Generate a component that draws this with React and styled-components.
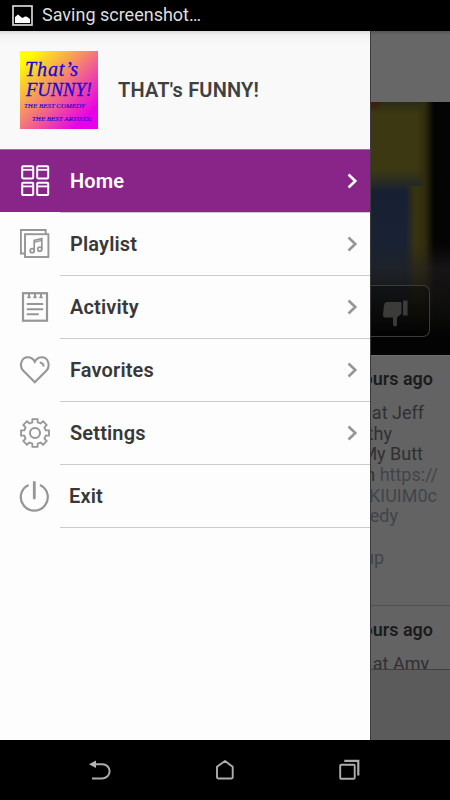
import styled, { createGlobalStyle } from "styled-components";

const GlobalStyle = createGlobalStyle`
  * {
    box-sizing: border-box;
  }
  body {
    margin: 0;
    background-color: #000000;
    font-family: Roboto, "Liberation Sans", sans-serif;
  }
`;

const Screen = styled.div`
  display: grid;
  grid-template-rows: 31px 709px 60px;
  width: 450px;
  height: 800px;
  overflow: hidden;
  background-color: #000000;
`;

const StatusBar = styled.div`
  display: flex;
  align-items: center;
  padding: 0 0 1px 12px;
  gap: 9px;
  color: #dedede;
  font-size: 18px;
  line-height: 22px;
  white-space: nowrap;
`;

const Main = styled.div`
  display: grid;
  grid-template-columns: 370px 80px;
  min-height: 0;
`;

const Drawer = styled.div`
  background-color: #fdfdfd;
`;

const DrawerHeader = styled.div`
  display: flex;
  align-items: center;
  gap: 20px;
  height: 119px;
  padding: 0 0 1px 20px;
  border-bottom: 1px solid #9c6f9e;
  background: linear-gradient(#d8d8d8, #f3f3f3 4px, #f9f9f9 14px);
  h1 {
    margin: 0;
    font-size: 20px;
    line-height: 24px;
    font-weight: 600;
    color: #404040;
    letter-spacing: 0.2px;
    white-space: nowrap;
  }
`;

const Logo = styled.div`
  width: 78px;
  height: 78px;
  overflow: hidden;
  background: linear-gradient(135deg, #ffff00 8%, #e800e8 85%);
  svg {
    display: block;
  }
  text {
    font-family: "Liberation Serif", serif;
    font-style: italic;
    fill: #1707dc;
  }
`;

const MenuRow = styled.div`
  display: grid;
  grid-template-columns: 60px 310px;
  height: 63px;
  background-color: ${(p) => (p.$active ? "#892489" : "transparent")};
  color: ${(p) => (p.$active ? "#ffffff" : "#969696")};
`;

const MenuIcon = styled.div`
  display: flex;
  align-items: center;
  padding-left: 19px;
  border-bottom: 1px solid #fdfdfd;
`;

const MenuBody = styled.div`
  display: flex;
  align-items: center;
  justify-content: space-between;
  padding: 0 11px 0 ${(p) => p.$indent || 10}px;
  border-bottom: 1px solid #cbcbcb;
  span {
    font-size: 20px;
    line-height: 24px;
    font-weight: 600;
    color: ${(p) => (p.$active ? "#ffffff" : "#383838")};
    letter-spacing: 0.15px;
    white-space: nowrap;
  }
`;

const Feed = styled.div`
  display: grid;
  grid-template-rows: 71px 253px 250px 64px 71px;
  overflow: hidden;
  background-color: #636363;
  border-left: 1px solid #3b3b3b;
`;

const FeedBar = styled.div`
  background: linear-gradient(#555555, #676767 4px);
`;

const Video = styled.div`
  display: flex;
  flex-direction: column;
  justify-content: flex-end;
  align-items: flex-start;
  padding-bottom: 18px;
  background:
    linear-gradient(
      transparent 56%,
      rgba(34, 32, 32, 0.6) 66%,
      rgba(14, 14, 12, 0.88) 82%,
      #030303 93%
    ),
    radial-gradient(circle at 4px 0, #421808 0, transparent 9px),
    linear-gradient(90deg, transparent 46px, #302b0e 54px, #050405 63px),
    linear-gradient(90deg, transparent 35px, #38330f 44px) 0 84px no-repeat,
    linear-gradient(#2c2c15 0, #3c3812 12px, #3c3812 68px, #172032 90px, #1a2737 100%);
`;

const DislikeBox = styled.div`
  display: flex;
  align-items: center;
  justify-content: flex-end;
  width: 59px;
  height: 52px;
  padding: 5px 21px 0 0;
  border: 1.5px solid #3b3b39;
  border-left: 0;
  border-radius: 0 7px 7px 0;
  background-color: rgba(0, 0, 0, 0.25);
`;

const Post = styled.div`
  overflow: hidden;
  padding-top: ${(p) => p.$top}px;
  border-top: 1px solid ${(p) => (p.$first ? "#707070" : "#505050")};
`;

const PostTime = styled.div`
  display: flex;
  justify-content: flex-end;
  padding-right: 17px;
  margin-bottom: 12px;
  font-size: 18px;
  line-height: 22px;
  font-weight: 600;
  color: #1b1b1b;
  white-space: nowrap;
`;

const PostLine = styled.div`
  display: flex;
  justify-content: flex-end;
  height: 20.7px;
  padding-right: ${(p) => p.$end}px;
  font-size: 18px;
  line-height: 22px;
  color: ${(p) => (p.$muted ? "#414549" : "#303030")};
  white-space: pre;
  b {
    font-weight: 400;
    color: #414549;
  }
`;

const FeedFooter = styled.div`
  border-top: 1px solid #3f3f3f;
  background-color: #5b5b5b;
`;

const NavBar = styled.div`
  display: flex;
  align-items: center;
  justify-content: space-between;
  padding: 0 90px 0 87px;
`;

const PictureIcon = () => (
  <svg width="21" height="21" viewBox="0 0 21 21">
    <rect x="1" y="1" width="19" height="19" fill="none" stroke="#d6d6d6" strokeWidth="1.7" />
    <path d="M3 18v-6l3-2.5 3 2.5 1.5 1 2.5-1.5 2 .2 3 2.3v4z" fill="#ffffff" />
  </svg>
);

const HomeIcon = () => (
  <svg width="32" height="32" viewBox="0 0 32 32" fill="none" stroke="currentColor" strokeWidth="2">
    {[
      [3.2, 1.2],
      [18.2, 1.2],
      [3.2, 17.8],
      [18.2, 17.8],
    ].map(([x, y]) => (
      <g key={`${x}-${y}`}>
        <rect x={x} y={y} width="11" height="12.2" rx="0.8" />
        <path d={`M${x} ${y + 3.6}h11`} strokeWidth="1.8" />
      </g>
    ))}
  </svg>
);

const PlaylistIcon = () => (
  <svg width="32" height="32" viewBox="0 0 32 32" fill="none" stroke="currentColor" strokeWidth="1.9">
    <path d="M5.5 25.5H1.9V2h24.8v4" />
    <rect x="6" y="6.2" width="23.4" height="22.8" />
    <path d="M15.2 22.8V12.5l7.6-1.9v10.6" strokeWidth="1.7" />
    <path d="M15.2 14.3l7.6-1.9" strokeWidth="1.2" />
    <circle cx="13.2" cy="22.7" r="2" strokeWidth="1.7" />
    <circle cx="20.8" cy="21.2" r="2" strokeWidth="1.7" />
  </svg>
);

const ActivityIcon = () => (
  <svg width="32" height="32" viewBox="0 0 32 32" fill="none" stroke="currentColor" strokeWidth="2.2">
    <rect x="4" y="2.2" width="24" height="27.5" />
    <path d="M10 2v5M16 2v5M22 2v5" strokeWidth="2" />
    <path d="M8.3 6.4h3.4M14.3 6.4h3.4M20.3 6.4h3.4" strokeWidth="1.9" />
    <path d="M8.5 13h15M8.5 18.2h15M8.5 23.3h10.5" strokeWidth="1.9" strokeLinecap="round" />
  </svg>
);

const HeartIcon = () => (
  <svg width="32" height="32" viewBox="0 0 32 32" fill="none" stroke="currentColor" strokeWidth="2.1">
    <path d="M15.8 28.2L4.3 16.7C-.2 12 2.3 3.3 8.7 3.3c3.4 0 5.8 2 7.1 4.5 1.3-2.5 3.7-4.5 7.1-4.5 6.4 0 8.9 8.7 4.4 13.4z" />
    <path d="M20.8 8.6c2.2.2 3.6 1.7 3.8 3.9" strokeWidth="2" />
  </svg>
);

// tooth outline, repeated for eight teeth round the hub
const gearPath = () => {
  const pts = [];
  for (let i = 0; i < 8; i++) {
    const mid = (i * Math.PI) / 4;
    [
      [11, -0.25],
      [14.2, -0.18],
      [14.2, 0.18],
      [11, 0.25],
    ].forEach(([r, a]) => {
      pts.push(`${(16 + r * Math.sin(mid + a)).toFixed(2)} ${(16 - r * Math.cos(mid + a)).toFixed(2)}`);
    });
  }
  return `M${pts.join("L")}z`;
};

const SettingsIcon = () => (
  <svg width="32" height="32" viewBox="0 0 32 32" fill="none" stroke="currentColor" strokeWidth="1.8">
    <path d={gearPath()} />
    <circle cx="16" cy="16" r="5" strokeWidth="2" />
  </svg>
);

const PowerIcon = () => (
  <svg width="32" height="32" viewBox="0 0 32 32" fill="none" stroke="currentColor" strokeWidth="2.2">
    <path d="M9.6 4.9a13.5 13.5 0 1 0 11.4 0" />
    <path d="M15.3 2.5v15.5" strokeWidth="2.8" strokeLinecap="round" />
  </svg>
);

const Chevron = () => (
  <svg width="12" height="16" viewBox="0 0 12 16" fill="none" stroke="currentColor" strokeWidth="2.6">
    <path d="M1.5 1.5L8.3 8l-6.8 6.5" />
  </svg>
);

const ThumbDown = () => (
  <svg width="25" height="27" viewBox="0 0 25 27" fill="#3b3b3a">
    <path d="M3.5 2h14q1 0 1 1v10c0 2-4 3-4.500 5v6.500q0 2-2 2t-2-2v-7H2Q0 17.500 0 15l1-10q.3-2.500 2.500-3z" />
    <rect x="20" y="0.5" width="4.6" height="15" rx="0.6" />
  </svg>
);

const BackIcon = () => (
  <svg width="24" height="22" viewBox="0 0 24 22">
    <path d="M7 5.2h8.5a6.9 6.9 0 0 1 0 14.2H5" fill="none" stroke="#adadad" strokeWidth="2" />
    <path d="M2 5.2L9 1.5v7.4z" fill="#b5b5b5" />
  </svg>
);

const NavHomeIcon = () => (
  <svg width="20" height="22" viewBox="0 0 20 22" fill="none" stroke="#adadad" strokeWidth="1.9" strokeLinejoin="round">
    <path d="M2 7.8L10 2l7.7 5.8v10.5q0 1.2-1.2 1.2H3.2Q2 19.5 2 18.3z" />
  </svg>
);

const RecentIcon = () => (
  <svg width="21" height="22" viewBox="0 0 21 22" fill="none" stroke="#adadad" strokeWidth="1.9">
    <rect x="1.2" y="5.8" width="14.5" height="14" rx="1" />
    <path d="M5.3 1.9h14v14.5" strokeWidth="2.2" />
  </svg>
);

const items = [
  { label: "Home", Icon: HomeIcon, active: true },
  { label: "Playlist", Icon: PlaylistIcon },
  { label: "Activity", Icon: ActivityIcon },
  { label: "Favorites", Icon: HeartIcon },
  { label: "Settings", Icon: SettingsIcon },
  { label: "Exit", Icon: PowerIcon, last: true },
];

const App = () => {
  return (
    <Screen>
      <GlobalStyle />
      <StatusBar>
        <PictureIcon />
        <span>Saving screenshot…</span>
      </StatusBar>
      <Main>
        <Drawer>
          <DrawerHeader>
            <Logo>
              <svg width="78" height="78" viewBox="0 0 78 78">
                <text x="5" y="25" fontSize="20" stroke="#1707dc" strokeWidth="0.3" textLength="53">That’s</text>
                <text x="6" y="45" fontSize="19" stroke="#1707dc" strokeWidth="0.3" textLength="66" lengthAdjust="spacingAndGlyphs">FUNNY!</text>
                <text x="4" y="57" fontSize="7" stroke="#1707dc" strokeWidth="0.15" textLength="61" lengthAdjust="spacingAndGlyphs">THE BEST COMEDY</text>
                <text x="12" y="69.5" fontSize="7" stroke="#1707dc" strokeWidth="0.15" textLength="60" lengthAdjust="spacingAndGlyphs">THE BEST ARTISTS!</text>
              </svg>
            </Logo>
            <h1>THAT's FUNNY!</h1>
          </DrawerHeader>
          {items.map(({ label, Icon, active, last }) => (
            <MenuRow key={label} $active={active}>
              <MenuIcon>
                <Icon />
              </MenuIcon>
              <MenuBody $active={active} $indent={last ? 9 : 10}>
                <span>{label}</span>
                {!last && <Chevron />}
              </MenuBody>
            </MenuRow>
          ))}
        </Drawer>
        <Feed>
          <FeedBar />
          <Video>
            <DislikeBox>
              <ThumbDown />
            </DislikeBox>
          </Video>
          <Post $first $top={12}>
            <PostTime>hours ago</PostTime>
            <PostLine $end={26}>at Jeff</PostLine>
            <PostLine $end={58}>thy</PostLine>
            <PostLine $end={27}>My Butt</PostLine>
            <PostLine $end={12}>
              n <b>https://</b>
            </PostLine>
            <PostLine $end={13} $muted>KIUIM0c</PostLine>
            <PostLine $end={52} $muted>edy</PostLine>
            <PostLine $end={0} />
            <PostLine $end={66} $muted>up</PostLine>
          </Post>
          <Post $top={13}>
            <PostTime>hours ago</PostTime>
            <PostLine $end={21}>at Amy</PostLine>
          </Post>
          <FeedFooter />
        </Feed>
      </Main>
      <NavBar>
        <BackIcon />
        <NavHomeIcon />
        <RecentIcon />
      </NavBar>
    </Screen>
  );
};

export default App;
